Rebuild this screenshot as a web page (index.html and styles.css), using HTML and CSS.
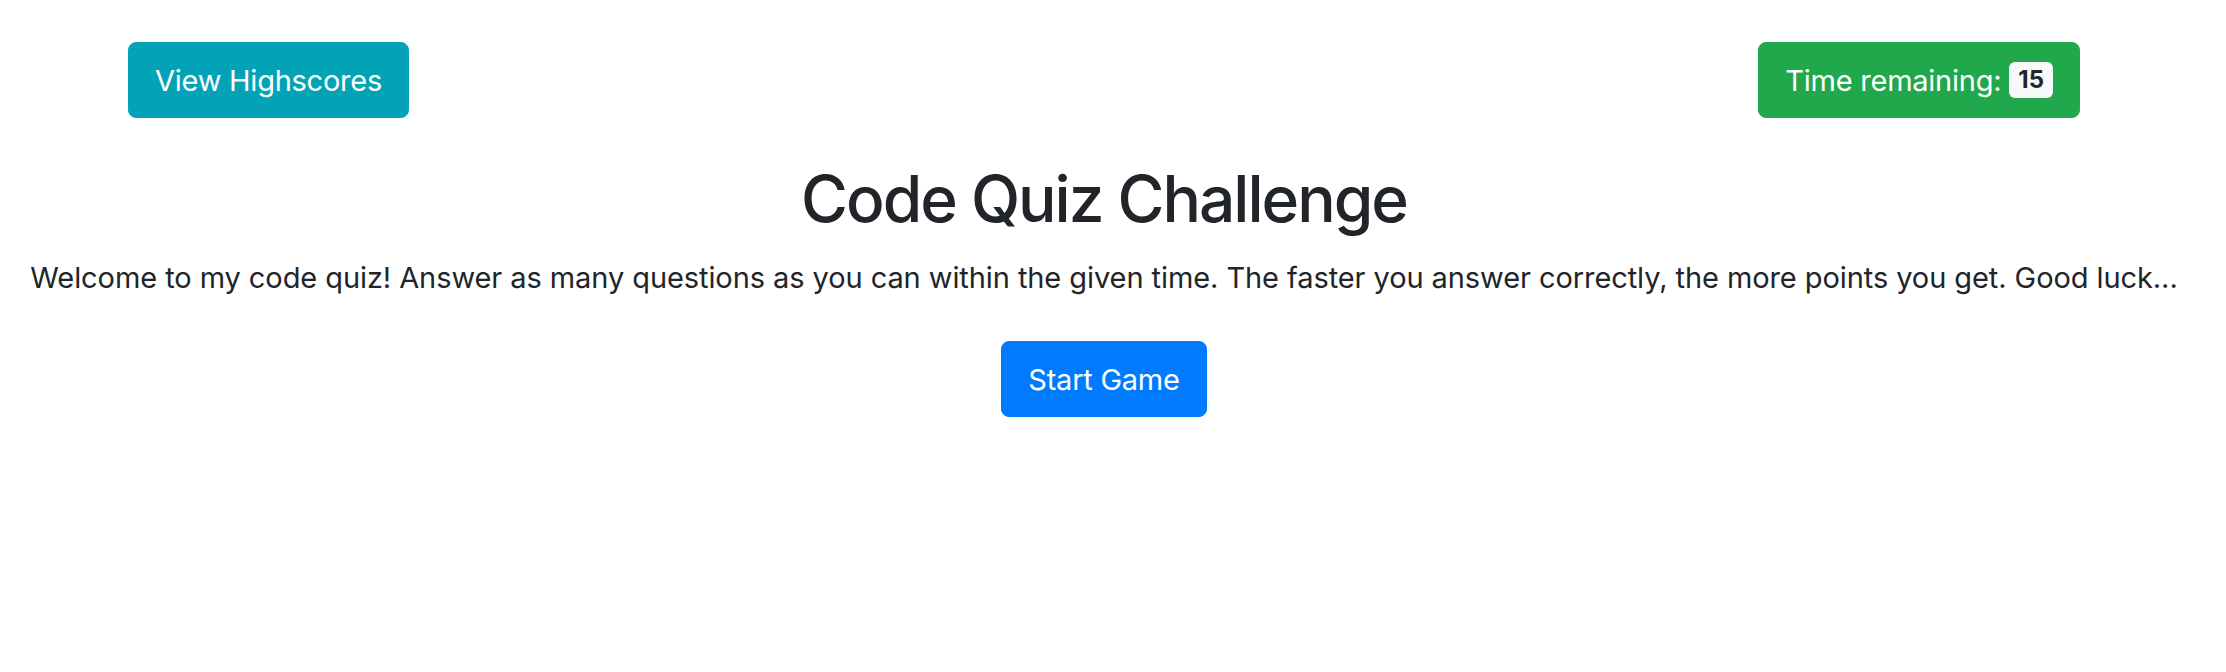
FILE: index.html
```html
<!DOCTYPE html>
<html lang="en">
<head>
<meta charset="utf-8">
<title>Code Quiz</title>
<link rel="stylesheet" href="styles.css">
</head>
<body>
<div class="page">
  <header class="topbar">
    <button class="btn btn-info">View Highscores</button>
    <button class="btn btn-success">Time remaining: <span class="badge">15</span></button>
  </header>
  <main class="intro">
    <h1 class="title">Code Quiz Challenge</h1>
    <p class="lead">Welcome to my code quiz! Answer as many questions as you can within the given time. The faster you answer correctly, the more points you get. Good luck...</p>
    <button class="btn btn-primary">Start Game</button>
  </main>
</div>
</body>
</html>
```
FILE: styles.css
```css
html, body {
  margin: 0;
  padding: 0;
  background: #fff;
}
body {
  font-family: Inter, "Liberation Sans", sans-serif;
  color: #212529;
  height: 672px;
}
.page {
  width: 2208px;
}
.topbar {
  display: flex;
  justify-content: space-between;
  padding: 42px 128px 0 128px;
}
.btn {
  font-family: inherit;
  font-size: 29px;
  letter-spacing: -0.25px;
  line-height: 45px;
  padding: 14.5px 26px;
  border: 1px solid transparent;
  border-radius: 8px;
  color: #fff;
  display: inline-flex;
  align-items: center;
  cursor: pointer;
}
.btn-info { background: #03a3b7; border-color: #03a3b7; }
.btn-success { background: #21a84c; border-color: #21a84c; }
.btn-primary { background: #007bff; border-color: #007bff; }
.badge {
  display: inline-block;
  margin-left: 8px;
  background: #f8f9fa;
  color: #212529;
  font-size: 24px;
  font-weight: 700;
  letter-spacing: 0;
  line-height: 36px;
  padding: 0 9px;
  border-radius: 6px;
}
.intro {
  display: flex;
  flex-direction: column;
  align-items: center;
  padding-top: 43px;
}
.title {
  margin: 0;
  font-size: 64px;
  font-weight: 500;
  letter-spacing: -2px;
  line-height: 1.2;
}
.lead {
  margin: 18px 0 42px;
  font-size: 29px;
  letter-spacing: -0.08px;
  line-height: 1.5;
  white-space: nowrap;
}
```
